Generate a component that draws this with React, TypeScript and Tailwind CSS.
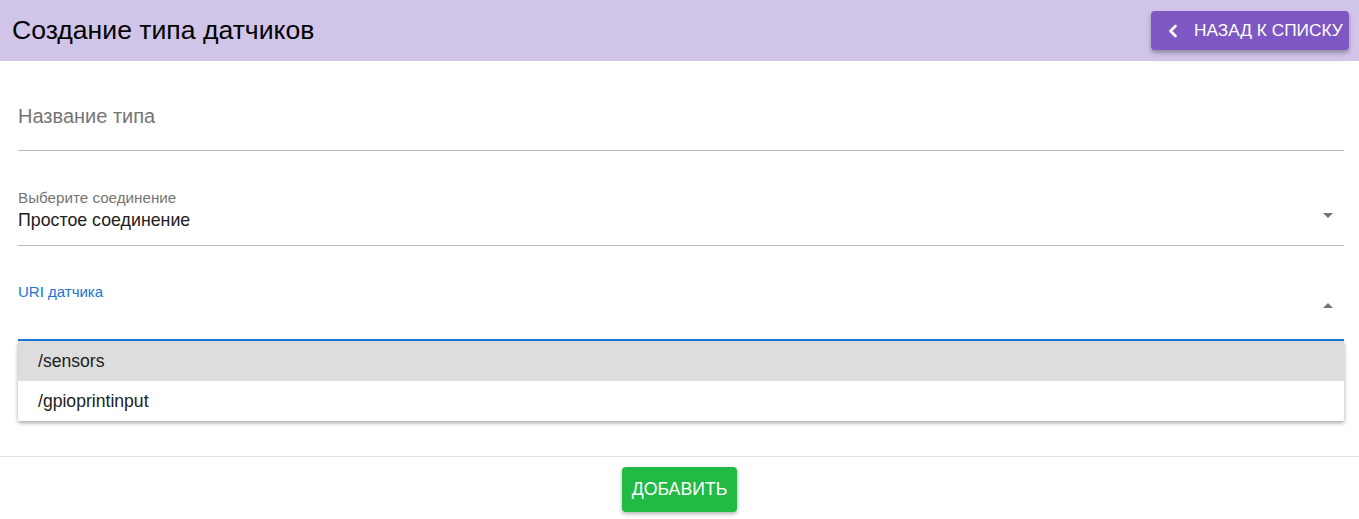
import { ChevronLeft } from "lucide-react";

const MENU_ITEMS = ["/sensors", "/gpioprintinput"];

function Caret({ up }: { up?: boolean }) {
  return (
    <svg width="12" height="6" viewBox="0 0 12 6" className="text-[#757575]">
      {up ? (
        <polygon points="1,6 6,1 11,6" fill="currentColor" />
      ) : (
        <polygon points="1,0 11,0 6,5" fill="currentColor" />
      )}
    </svg>
  );
}

export default function App() {
  return (
    <div className="min-h-[519px] bg-white [font-family:'Liberation_Sans',Arial,sans-serif] text-[#212121]">
      <header className="flex h-[61px] items-center justify-between bg-[#d1c4e9] pl-[12px] pr-[10px]">
        <h1 className="text-[26.6px] leading-none text-black">Создание типа датчиков</h1>
        <button
          type="button"
          className="flex h-[39px] w-[198px] items-center gap-[11px] rounded-[4px] bg-[#7e57c2] pl-[12px] text-[17.3px] whitespace-nowrap text-white shadow-[0_3px_4px_rgba(0,0,0,0.3)]"
        >
          <ChevronLeft className="h-[20px] w-[20px] shrink-0" strokeWidth={3.2} />
          НАЗАД К СПИСКУ
        </button>
      </header>

      <main className="pl-[18px] pr-[15px]">
        <div className="border-b border-[#bdbdbd] pt-[44px] pb-[23px] text-[20px] leading-[22px] text-[#757575]">
          Название типа
        </div>

        <div className="relative border-b border-[#bdbdbd] pt-[39px] pb-[14px]">
          <div className="text-[15.2px] leading-[16px] text-[#757575]">Выберите соединение</div>
          <div className="mt-[3px] text-[17.8px] leading-[22px] text-[#212121]">Простое соединение</div>
          <div className="absolute right-[10px] top-[62px]">
            <Caret />
          </div>
        </div>

        <div className="relative border-b-2 border-[#1976d2] pt-[38px] pb-[39px]">
          <div className="text-[15px] leading-[16px] text-[#1976d2]">URI датчика</div>
          <div className="absolute right-[10px] top-[56px]">
            <Caret up />
          </div>
        </div>

        <ul className="bg-white shadow-[0_2px_4px_rgba(0,0,0,0.35)]">
          {MENU_ITEMS.map((item, i) => (
            <li
              key={item}
              className={`flex h-[40px] items-center pl-[20px] text-[17.6px] text-[#212121] ${i === 0 ? "bg-[#dddddd]" : ""}`}
            >
              {item}
            </li>
          ))}
        </ul>
      </main>

      <footer className="mt-[35px] flex justify-center border-t border-[#e0e0e0] pt-[10px]">
        <button
          type="button"
          className="h-[45px] w-[115px] rounded-[4px] bg-[#21ba45] text-[17.7px] text-white shadow-[0_2px_4px_rgba(0,0,0,0.3)]"
        >
          ДОБАВИТЬ
        </button>
      </footer>
    </div>
  );
}
